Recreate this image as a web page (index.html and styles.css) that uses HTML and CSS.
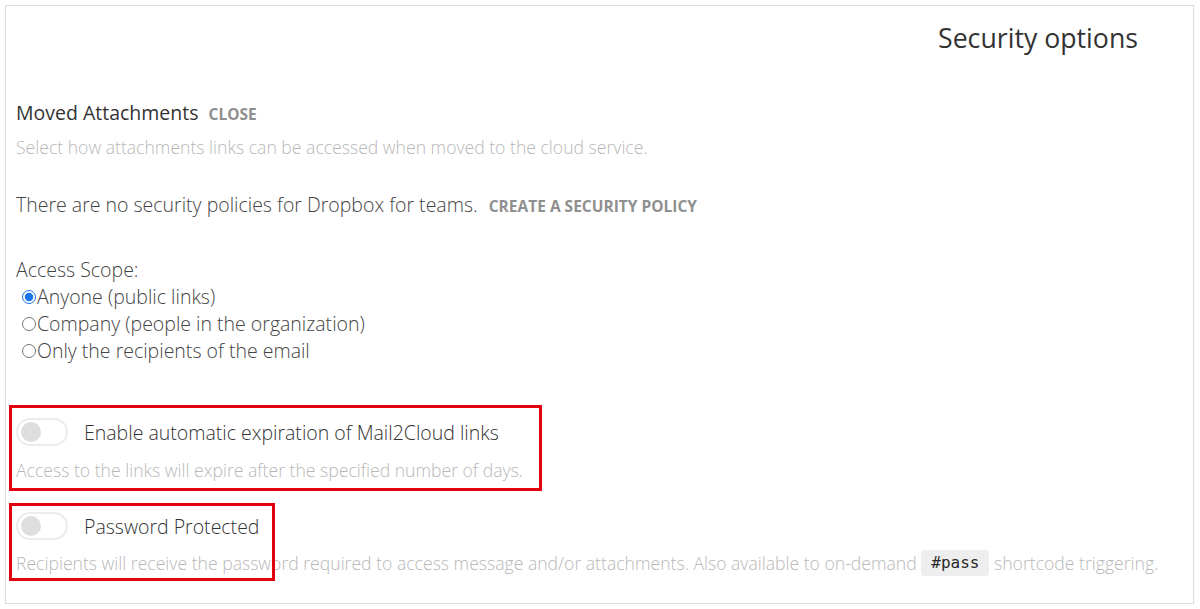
FILE: index.html
```html
<!DOCTYPE html>
<html>
<head>
<meta charset="utf-8">
<link rel="stylesheet" href="styles.css">
</head>
<body>
<div class="card">
  <h1 class="title">Security options</h1>
  <div class="section-head">
    <span class="section-name">Moved Attachments</span>
    <a class="action">CLOSE</a>
  </div>
  <p class="hint intro-hint">Select how attachments links can be accessed when moved to the cloud service.</p>
  <p class="policy">There are no security policies for Dropbox for teams. <a class="action">CREATE A SECURITY POLICY</a></p>
  <div class="scope">
    <div class="scope-label">Access Scope:</div>
    <label class="radio"><input type="radio" name="scope" checked>Anyone (public links)</label>
    <label class="radio"><input type="radio" name="scope">Company (people in the organization)</label>
    <label class="radio"><input type="radio" name="scope">Only the recipients of the email</label>
  </div>
  <div class="option option-first">
    <div class="option-row">
      <span class="toggle"><span class="knob"></span></span>
      <span class="option-label">Enable automatic expiration of Mail2Cloud links</span>
    </div>
    <p class="hint option-hint">Access to the links will expire after the specified number of days.</p>
  </div>
  <div class="option option-second">
    <div class="option-row">
      <span class="toggle"><span class="knob"></span></span>
      <span class="option-label">Password Protected</span>
    </div>
    <p class="hint option-hint code-hint">Recipients will receive the password required to access message and/or attachments. Also available to on-demand <code class="code">#pass</code> shortcode triggering.</p>
  </div>
  <div class="mark mark-1"></div>
  <div class="mark mark-2"></div>
</div>
</body>
</html>
```
FILE: styles.css
```css
html, body {
  margin: 0;
  padding: 0;
  background: #ffffff;
}
body {
  padding: 5px 6px 0 5px;
  font-family: "Open Sans", "Liberation Sans", sans-serif;
  color: #333;
}
.card {
  position: relative;
  border: 1px solid #dcdcdc;
  box-shadow: 0 1px 2px rgba(0,0,0,0.08);
  height: 599px;
  box-sizing: border-box;
  padding: 0 10px 0 10px;
}
.title {
  margin: 0;
  padding: 14px 45px 0 0;
  text-align: right;
  font-size: 26.7px;
  font-weight: 400;
  line-height: 36px;
  color: #333;
}
.section-head {
  margin-top: 44px;
  display: flex;
  align-items: baseline;
  gap: 10px;
  line-height: 26px;
  height: 26px;
}
.section-name {
  font-size: 19.5px;
  font-weight: 400;
  color: #333;
}
.action {
  font-size: 15.5px;
  font-weight: 700;
  color: #8f8f8f;
  text-transform: uppercase;
}
.hint {
  margin: 0;
  font-size: 17.6px;
  font-weight: 300;
  color: #b8b8b8;
  line-height: 24px;
}
.intro-hint {
  margin-top: 9px;
}
.policy {
  margin: 33px 0 0 0;
  font-size: 19.5px;
  font-weight: 300;
  color: #444;
  line-height: 26px;
  height: 26px;
}
.policy .action {
  margin-left: 6px;
}
.scope {
  margin-top: 38px;
  font-size: 19.5px;
  font-weight: 300;
  color: #444;
  line-height: 27px;
}
.scope-label {
  line-height: 27px;
}
.radio {
  display: flex;
  align-items: center;
  height: 27px;
}
.radio input {
  margin: 0 1px 0 6px;
  width: 14px;
  height: 14px;
  accent-color: #1a73e8;
}
.option-first {
  margin-top: 53px;
}
.option-second {
  margin-top: 29px;
}
.option-row {
  display: flex;
  align-items: center;
  gap: 16px;
  height: 30px;
}
.toggle {
  width: 52px;
  height: 28px;
  box-sizing: border-box;
  border: 2px solid #ececec;
  border-radius: 14px;
  background: #fff;
  display: flex;
  align-items: center;
  padding-left: 3px;
  flex-shrink: 0;
}
.knob {
  width: 20px;
  height: 20px;
  border-radius: 50%;
  background: #dedede;
}
.option-label {
  font-size: 19.5px;
  font-weight: 300;
  color: #333;
}
.option-hint {
  margin-top: 11px;
}
.code-hint {
  margin-top: 9px;
  line-height: 26px;
}
.code {
  display: inline-block;
  font-family: "DejaVu Sans Mono", "Liberation Mono", monospace;
  font-size: 16px;
  font-weight: 400;
  color: #2a2a2a;
  background: #eeeeee;
  border-radius: 3px;
  padding: 0 10px;
  margin: 0;
  line-height: 26px;
  vertical-align: top;
}
.mark {
  position: absolute;
  border: 3px solid #e3000f;
  box-sizing: border-box;
  pointer-events: none;
}
.mark-1 {
  left: 3px;
  top: 399px;
  width: 533px;
  height: 86px;
}
.mark-2 {
  left: 3px;
  top: 497px;
  width: 266px;
  height: 78px;
}
```
